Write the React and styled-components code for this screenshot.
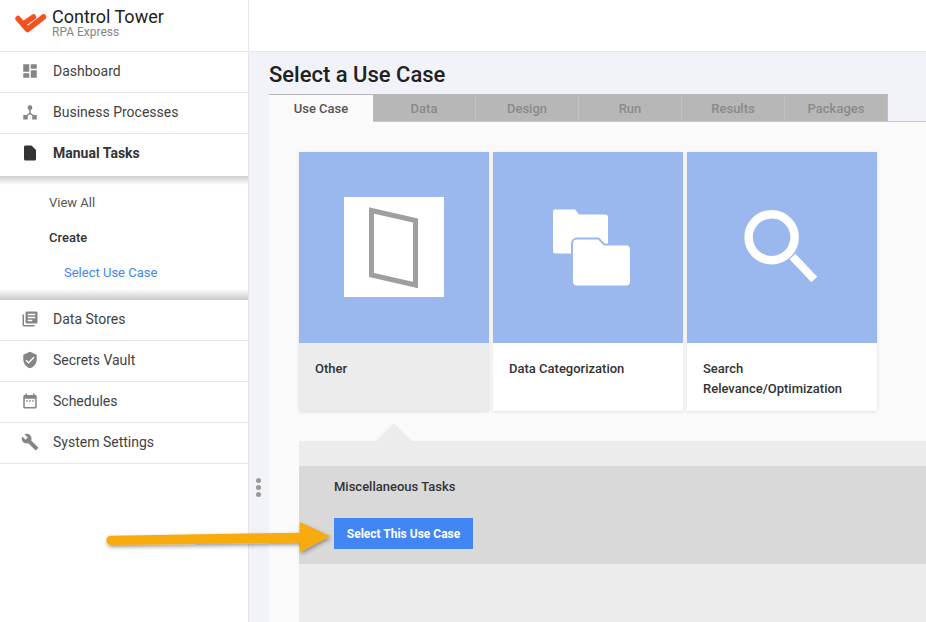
import React from 'react';
import styled, { createGlobalStyle } from 'styled-components';

const GlobalStyle = createGlobalStyle`
  html, body {
    margin: 0;
    padding: 0;
    height: 100%;
    overflow: hidden;
  }
  body {
    font-family: Roboto, "Liberation Sans", sans-serif;
    background: #f2f3f8;
  }
`;

const paths = {
  dashboard: 'M3 13h8V3H3v10zm0 8h8v-6H3v6zm10 0h8V11h-8v10zm0-18v6h8V3h-8z',
  file: 'M14 2H6c-1.1 0-2 .9-2 2v16c0 1.1.9 2 2 2h12c1.1 0 2-.9 2-2V8l-6-6z',
  books: 'M4 6H2v14c0 1.1.9 2 2 2h14v-2H4V6zm16-4H8c-1.1 0-2 .9-2 2v12c0 1.1.9 2 2 2h12c1.1 0 2-.9 2-2V4c0-1.1-.9-2-2-2zm-1 9H9V9h10v2zm-4 4H9v-2h6v2zm4-8H9V5h10v2z',
  shield: 'M12 1L3 5v6c0 5.55 3.84 10.74 9 12 5.16-1.26 9-6.45 9-12V5l-9-4zm-2 16l-4-4 1.41-1.41L10 14.17l6.59-6.59L18 9l-8 8z',
  calendar: 'M9 11H7v2h2v-2zm4 0h-2v2h2v-2zm4 0h-2v2h2v-2zm2-7h-1V2h-2v2H8V2H6v2H5c-1.11 0-1.99.9-1.99 2L3 20c0 1.1.89 2 2 2h14c1.1 0 2-.9 2-2V6c0-1.1-.9-2-2-2zm0 16H5V9h14v11z',
  wrench: 'M22.7 19l-9.1-9.1c.9-2.3.4-5-1.5-6.9-2-2-5-2.4-7.4-1.3L9 6 6 9 1.6 4.7C.4 7.1.9 10.1 2.9 12.1c1.9 1.9 4.6 2.4 6.9 1.5l9.1 9.1c.4.4 1 .4 1.4 0l2.3-2.3c.5-.4.5-1.1.1-1.4z',
  process: 'M12 3a3.2 3.2 0 1 1 0 6.4A3.2 3.2 0 0 1 12 3zM11 9h2v4.2l4.6 3.3-1.2 1.6L12 15l-4.4 3.1-1.2-1.6 4.6-3.3V9zM3 16h6v6H3v-6zm12 0h6v6h-6v-6z',
};

const Page = styled.div`
  position: relative;
  display: flex;
  width: 926px;
  height: 622px;
  overflow: hidden;
`;

const Sidebar = styled.aside`
  width: 248px;
  flex: none;
  background: #fff;
  border-right: 1px solid #e6e6e6;
`;

const Brand = styled.div`
  height: 51px;
  display: flex;
  align-items: flex-start;
  gap: 4px;
  padding-left: 14px;
  border-bottom: 1px solid #e6e6e6;
`;

const BrandText = styled.div`
  padding-top: 7px;
`;

const BrandName = styled.div`
  font-size: 18px;
  line-height: 19px;
  color: #212121;
`;

const BrandSub = styled.div`
  font-size: 12px;
  line-height: 12px;
  color: #858585;
`;

const NavList = styled.nav`
  display: flex;
  flex-direction: column;
`;

const NavRow = styled.div`
  height: 38px;
  padding: 0 0 2px 21px;
  display: flex;
  align-items: center;
  gap: 14px;
  border-bottom: 1px solid ${p => (p.$open ? 'transparent' : '#e6e6e6')};
  font-size: 14px;
  font-weight: ${p => (p.$active ? 700 : 400)};
  color: ${p => (p.$active ? '#333' : '#424242')};
  margin-bottom: ${p => (p.$open ? '1px' : '0')};
`;

const NavIcon = styled.svg`
  width: 18px;
  height: 18px;
  flex: none;
  fill: ${p => (p.$active ? '#333' : '#858585')};
`;

const SubMenu = styled.div`
  height: 124px;
  padding-bottom: 1px;
  box-sizing: border-box;
  display: flex;
  flex-direction: column;
  justify-content: center;
  background: linear-gradient(#cfcfcf, #fff 9px, #fff calc(100% - 11px), #c9c9c9);
  font-size: 13px;
`;

const SubItem = styled.div`
  height: 35px;
  line-height: 35px;
  padding-left: ${p => (p.$nested ? '64px' : '49px')};
  color: ${p => p.$color};
  font-weight: ${p => (p.$bold ? 500 : 400)};
`;

const Main = styled.main`
  flex: 1;
  min-width: 0;
  display: flex;
  flex-direction: column;
`;

const TopBar = styled.div`
  height: 51px;
  flex: none;
  background: #fff;
  border-bottom: 1px solid #e6e6e6;
`;

const Content = styled.div`
  flex: 1;
  padding-left: 20px;
  display: flex;
  flex-direction: column;
`;

const Heading = styled.h1`
  margin: 0;
  height: 42px;
  font-size: 22px;
  line-height: 46px;
  font-weight: 500;
  color: #212121;
`;

const Tabs = styled.div`
  display: flex;
  height: 27px;
  border-bottom: 1px solid #c8c8c8;
  flex: none;
`;

const Tab = styled.div`
  width: ${p => (p.$active ? '104px' : '103px')};
  height: ${p => (p.$active ? '28px' : '27px')};
  box-sizing: border-box;
  display: flex;
  align-items: center;
  justify-content: center;
  font-size: 13px;
  font-weight: 500;
  background: ${p => (p.$active ? '#fafafa' : '#b7b7b7')};
  color: ${p => (p.$active ? '#555' : '#8a8a8a')};
  border-top: 1px solid #b7b7b7;
  border-right: ${p => (p.$active ? 'none' : '1px solid #c2c2c2')};
`;

const Panel = styled.section`
  flex: 1;
  background: #fafafa;
  padding: 30px 0 0 30px;
`;

const Cards = styled.div`
  display: flex;
  gap: 4px;
`;

const Card = styled.article`
  width: 190px;
  height: 259px;
  background: ${p => (p.$selected ? '#ececec' : '#fff')};
  box-shadow: 0 1px 3px rgba(0, 0, 0, 0.12);
`;

const CardArt = styled.div`
  height: 191px;
  background: #9ab8ee;
  display: flex;
  align-items: center;
  justify-content: center;
`;

const CardLabel = styled.div`
  padding: 16px 16px 0;
  font-size: 13px;
  line-height: 20px;
  font-weight: 500;
  color: #333;
`;

const OtherTile = styled.svg`
  width: 100px;
  height: 100px;
  display: block;
  margin-bottom: 1px;
`;

const Details = styled.div`
  position: relative;
  margin-top: 30px;
  height: 181px;
  padding-top: 25px;
  background: #ececec;

  &::before {
    content: '';
    position: absolute;
    left: 77px;
    top: -18px;
    border-left: 18px solid transparent;
    border-right: 18px solid transparent;
    border-bottom: 18px solid #ececec;
  }
`;

const DetailsBand = styled.div`
  height: 98px;
  background: #d9d9d9;
  padding: 12px 0 0 35px;
  box-sizing: border-box;
`;

const DetailsTitle = styled.div`
  font-size: 13px;
  line-height: 17px;
  font-weight: 500;
  color: #333;
`;

const SelectButton = styled.button`
  display: block;
  margin-top: 23px;
  width: 139px;
  height: 31px;
  border: none;
  padding: 0;
  background: #4285f4;
  color: #fff;
  font-family: inherit;
  font-size: 12px;
  font-weight: 700;
`;

const Handle = styled.div`
  position: absolute;
  left: 256px;
  top: 478px;
  display: flex;
  flex-direction: column;
  gap: 2px;

  span {
    width: 5px;
    height: 5px;
    border-radius: 50%;
    background: #999;
  }
`;

const Arrow = styled.svg`
  position: absolute;
  left: 100px;
  top: 515px;
  overflow: visible;
`;

const nav1 = [
  { icon: 'dashboard', label: 'Dashboard' },
  { icon: 'process', label: 'Business Processes' },
  { icon: 'file', label: 'Manual Tasks', active: true, open: true },
];

const nav2 = [
  { icon: 'books', label: 'Data Stores' },
  { icon: 'shield', label: 'Secrets Vault' },
  { icon: 'calendar', label: 'Schedules' },
  { icon: 'wrench', label: 'System Settings' },
];

const tabs = ['Use Case', 'Data', 'Design', 'Run', 'Results', 'Packages'];

const Item = ({ icon, label, active, open }) => (
  <NavRow $active={active} $open={open}>
    <NavIcon $active={active} viewBox="0 0 24 24"><path d={paths[icon]} /></NavIcon>
    {label}
  </NavRow>
);

const Logo = () => (
  <svg width="34" height="24" viewBox="0 0 34 24" style={{ marginTop: 11 }} fill="none" stroke="#f4511e" strokeWidth="5.5" strokeLinecap="round" strokeLinejoin="round">
    <path d="M4 7.5L13.5 18.5L29.5 6" />
    <path d="M10 12.5L19.5 6" />
  </svg>
);

const Folders = () => (
  <svg width="84" height="80" viewBox="0 0 84 80">
    <path d="M9 1.5h20l4 5h26a3 3 0 0 1 3 3v36H9a2 2 0 0 1-2-2V3.5a2 2 0 0 1 2-2z" fill="#fff" />
    <path d="M27 35.5a4 4 0 0 1 4-4h21l6 6h22a4 4 0 0 1 4 4v32a4 4 0 0 1-4 4H31a4 4 0 0 1-4-4z" fill="#fff" stroke="#9ab8ee" strokeWidth="4" paintOrder="stroke" />
  </svg>
);

const Magnifier = () => (
  <svg width="80" height="80" viewBox="0 0 80 80" fill="none" stroke="#fff">
    <circle cx="29.6" cy="29.2" r="23" strokeWidth="8.5" />
    <path d="M50.5 48.5L72.3 71.5" strokeWidth="8" />
  </svg>
);

const App = () => (
  <Page>
    <GlobalStyle />
    <Sidebar>
      <Brand>
        <Logo />
        <BrandText>
          <BrandName>Control Tower</BrandName>
          <BrandSub>RPA Express</BrandSub>
        </BrandText>
      </Brand>
      <NavList>
        {nav1.map(n => <Item key={n.label} {...n} />)}
        <SubMenu>
          <SubItem $color="#555">View All</SubItem>
          <SubItem $color="#333" $bold>Create</SubItem>
          <SubItem $color="#4285f4" $nested>Select Use Case</SubItem>
        </SubMenu>
        {nav2.map(n => <Item key={n.label} {...n} />)}
      </NavList>
    </Sidebar>
    <Main>
      <TopBar />
      <Content>
        <Heading>Select a Use Case</Heading>
        <Tabs>
          {tabs.map((t, i) => <Tab key={t} $active={i === 0}>{t}</Tab>)}
        </Tabs>
        <Panel>
          <Cards>
            <Card $selected>
              <CardArt>
                <OtherTile viewBox="0 0 100 100">
                  <rect width="100" height="100" fill="#fff" />
                  <path d="M27.5 13.5L71.5 23.5V88L27.5 78Z" fill="none" stroke="#a09e9e" strokeWidth="5" />
                </OtherTile>
              </CardArt>
              <CardLabel>Other</CardLabel>
            </Card>
            <Card>
              <CardArt><Folders /></CardArt>
              <CardLabel>Data Categorization</CardLabel>
            </Card>
            <Card>
              <CardArt><Magnifier /></CardArt>
              <CardLabel>Search Relevance/Optimization</CardLabel>
            </Card>
          </Cards>
          <Details>
            <DetailsBand>
              <DetailsTitle>Miscellaneous Tasks</DetailsTitle>
              <SelectButton>Select This Use Case</SelectButton>
            </DetailsBand>
          </Details>
        </Panel>
      </Content>
    </Main>
    <Handle><span /><span /><span /></Handle>
    <Arrow width="235" height="40" viewBox="0 0 235 40">
      <defs>
        <filter id="arrowShadow" x="-5%" y="-30%" width="110%" height="170%">
          <feDropShadow dx="1" dy="2" stdDeviation="2" floodColor="#000" floodOpacity="0.4" />
        </filter>
      </defs>
      <path d="M11 20.7L200 17.7V7.3L230 21L200 37V27.7L11 30a4.6 4.6 0 0 1 0-9.3z" fill="#f8ab0a" filter="url(#arrowShadow)" />
    </Arrow>
  </Page>
);

export default App;
